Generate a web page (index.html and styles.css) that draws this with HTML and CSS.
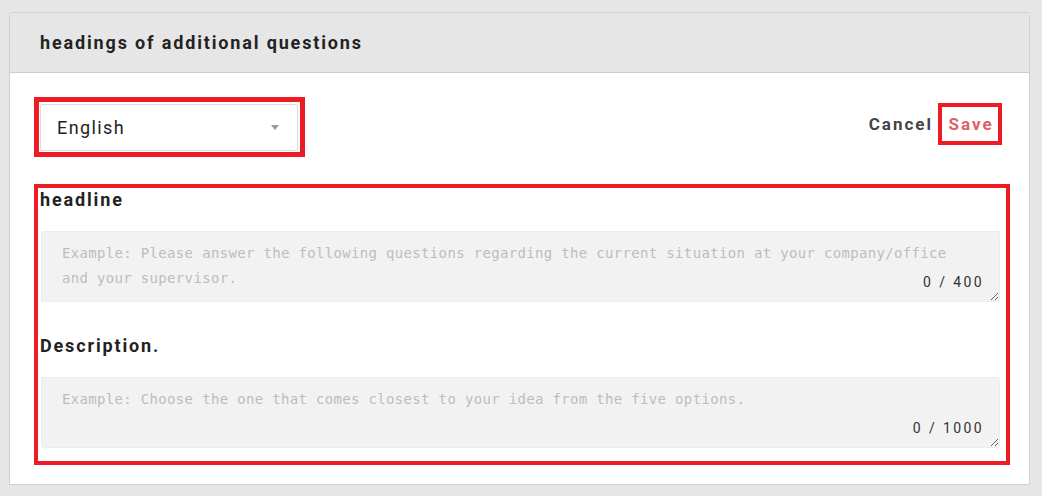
FILE: index.html
```html
<!DOCTYPE html>
<html lang="en">
<head>
<meta charset="utf-8">
<title>headings of additional questions</title>
<link rel="stylesheet" href="styles.css">
</head>
<body>
<section class="card">
  <header class="card-head">headings of additional questions</header>
  <div class="card-body">
    <div class="toolbar">
      <div class="mark mark-select">
        <div class="select">
          <span class="select-value">English</span>
          <span class="caret"></span>
        </div>
      </div>
      <div class="actions">
        <button class="btn btn-cancel" type="button">Cancel</button>
        <span class="mark mark-save"><button class="btn btn-save" type="button">Save</button></span>
      </div>
    </div>
    <div class="mark mark-fields">
      <div class="field">
        <label class="field-label">headline</label>
        <div class="area-wrap">
          <textarea class="area" placeholder="Example: Please answer the following questions regarding the current situation at your company/office&#10;and your supervisor."></textarea>
          <span class="counter">0 / 400</span>
        </div>
      </div>
      <div class="field">
        <label class="field-label">Description.</label>
        <div class="area-wrap">
          <textarea class="area" placeholder="Example: Choose the one that comes closest to your idea from the five options."></textarea>
          <span class="counter">0 / 1000</span>
        </div>
      </div>
    </div>
  </div>
</section>
</body>
</html>
```

FILE: styles.css
```css
* { box-sizing: border-box; }
html, body { height: 100%; }
body {
  margin: 0;
  padding: 12px 12px 0 9px;
  background: #e6e6e6;
  font-family: Roboto, "Liberation Sans", sans-serif;
  color: #222;
  overflow: hidden;
}
.card {
  border: 1px solid #cfcfcf;
  border-radius: 4px 4px 0 0;
  background: #fff;
  height: 473px;
  display: flex;
  flex-direction: column;
}
.card-head {
  height: 60px;
  background: #e6e6e6;
  border-bottom: 1px solid #cdcdcd;
  border-radius: 4px 4px 0 0;
  padding-left: 30px;
  display: flex;
  align-items: center;
  font-weight: 700;
  font-size: 18px;
  letter-spacing: 1.85px;
  color: #222;
}
.card-body {
  padding: 24px 19px 0 24px;
}
.toolbar {
  display: flex;
  justify-content: space-between;
  align-items: flex-start;
  margin-bottom: 27px;
}
.mark { border: 4px solid #ed1c24; }
.mark-select {
  border-width: 5px;
  padding: 2px 2px 1px 1px;
}
.select {
  width: 258px;
  height: 47px;
  border: 1px solid #dcdcdc;
  border-radius: 2px;
  display: flex;
  align-items: center;
  justify-content: space-between;
  padding: 0 18px 0 16px;
  font-size: 18px;
  letter-spacing: 1.4px;
  color: #222;
}
.caret {
  width: 0;
  height: 0;
  border-left: 4.5px solid transparent;
  border-right: 4.5px solid transparent;
  border-top: 5px solid #9a9a9a;
}
.actions {
  display: flex;
  align-items: center;
  margin-top: 6px;
  margin-right: 8px;
  gap: 5px;
}
.btn {
  border: 0;
  background: none;
  font-family: Roboto, "Liberation Sans", sans-serif;
  font-weight: 700;
  font-size: 17px;
  letter-spacing: 2px;
  padding: 0;
  cursor: pointer;
}
.btn-cancel { color: #444; }
.mark-save {
  display: inline-flex;
  align-items: center;
  justify-content: center;
  width: 64px;
  height: 42px;
  padding-left: 2px;
}
.btn-save { color: #e05f63; }
.mark-fields {
  padding: 0 6px 13px 2px;
}
.field + .field { margin-top: 32px; }
.field-label {
  display: block;
  height: 24px;
  line-height: 24px;
  font-weight: 700;
  font-size: 18px;
  letter-spacing: 1.85px;
  color: #222;
  margin-bottom: 19px;
}
.area-wrap { position: relative; margin-left: 1px; }
.area {
  display: block;
  width: 100%;
  height: 71px;
  background: #f2f2f2;
  border: 1px solid #ececec;
  border-radius: 2px;
  padding: 9px 18px 0 20px;
  font-family: "DejaVu Sans Mono", "Liberation Mono", monospace;
  font-size: 14px;
  letter-spacing: 0.33px;
  line-height: 25px;
  color: #333;
  resize: vertical;
  outline: none;
}
.area::placeholder { color: #bdbdbd; }
.counter {
  position: absolute;
  right: 16px;
  bottom: 11px;
  font-size: 14px;
  letter-spacing: 2.4px;
  color: #333;
  line-height: 18px;
}
```
